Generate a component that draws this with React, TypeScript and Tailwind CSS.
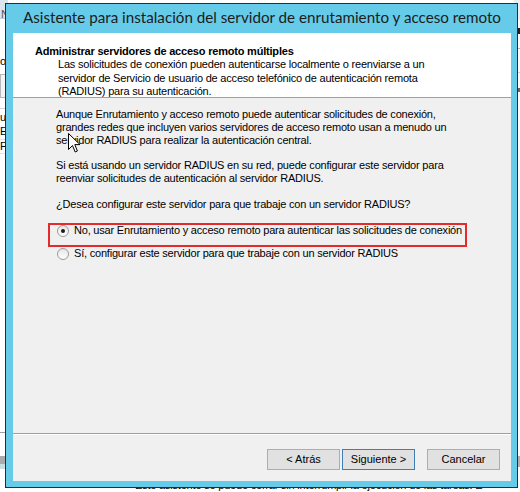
function Radio({ checked, label }: { checked?: boolean; label: string }) {
  return (
    <div className="flex items-start gap-[5px]">
      <span className="mt-[1px] flex h-[12px] w-[12px] items-center justify-center rounded-full border border-[#9a9a9a] bg-gradient-to-b from-[#e6e6e6] to-white">
        {checked && <span className="h-[4px] w-[4px] rounded-full bg-[#1a1a1a]" />}
      </span>
      <span className="whitespace-nowrap leading-[13px]">{label}</span>
    </div>
  )
}

function WizardButton({ label, primary }: { label: string; primary?: boolean }) {
  return (
    <button
      className={
        primary
          ? 'flex h-[21px] w-[73px] items-center justify-center border border-[#3d7fb6] bg-[#e1e1e1] leading-[13px]'
          : 'flex h-[21px] w-[73px] items-center justify-center border border-[#adadad] bg-[#e1e1e1] leading-[13px]'
      }
    >
      {label}
    </button>
  )
}

function Cursor() {
  return (
    <svg className="absolute left-[55px] top-[35px]" width="13" height="21" viewBox="0 0 13 21">
      <path
        d="M0.5 0.5 L0.5 16.5 L4.5 12.5 L7.2 19 L9.4 18 L6.8 11.6 L12 11.6 Z"
        fill="#fff"
        stroke="#000"
        strokeWidth="1"
      />
    </svg>
  )
}

// the window behind the wizard, only its edges show
function BehindWindow() {
  return (
    <div className="flex h-full w-full flex-col">
      <div className="flex h-[486px] justify-between">
        <div className="flex w-[8px] flex-col overflow-hidden">
          <div className="h-[18px] shrink-0 bg-[#dde5ec] pt-[6px] pl-[1px] text-[#555]">N</div>
          <div className="h-px shrink-0 bg-[#c4ccd4]" />
          <div className="h-[36px] shrink-0" />
          <div className="h-[19px] shrink-0 leading-[13px]">o</div>
          <div className="h-[24px] shrink-0 border border-[#b8b8b8] bg-[#f4f4f4]" />
          <div className="h-[10px] shrink-0" />
          <div className="h-px shrink-0 bg-[#d6d6d6]" />
          <div className="h-[16px] shrink-0 pt-[2px] leading-[13px]">u</div>
          <div className="h-[14px] shrink-0 leading-[13px]">E</div>
          <div className="h-px shrink-0 bg-[#e2e2e2]" />
          <div className="h-[13px] shrink-0 leading-[13px]">F</div>
          <div className="h-px shrink-0 bg-[#e2e2e2]" />
          <div className="h-[278px] shrink-0" />
          <div className="h-px shrink-0 bg-[#a0a0a0]" />
          <div className="h-[23px] shrink-0" />
          <div className="h-[8px] shrink-0 bg-[#ababab]" />
          <div className="h-[5px] shrink-0 bg-[#c9dde4]" />
        </div>
        <div className="flex w-[6px] flex-col">
          <div className="h-[20px] shrink-0 bg-[#e9eef3]" />
          <div className="h-[8px] shrink-0" />
          <div className="ml-[3px] h-[6px] shrink-0 bg-[#222]" />
          <div className="h-[14px] shrink-0" />
          <div className="h-px shrink-0 bg-[#b5b5b5]" />
          <div className="h-[23px] shrink-0" />
          <div className="h-px shrink-0 bg-[#cfcfcf]" />
          <div className="h-[15px] shrink-0" />
          <div className="ml-[4px] h-[4px] shrink-0 bg-[#666]" />
          <div className="h-[364px] shrink-0" />
          <div className="h-[11px] shrink-0 bg-[#b0b0b0]" />
        </div>
      </div>
      <div className="flex">
        <div className="ml-[73px] h-[8px] w-px bg-[#c8c8c8]" />
        <div className="ml-[61px] mt-[-1px] whitespace-nowrap leading-[13px]">
          Este asistente se puede cerrar sin interrumpir la ejecución de las tareas. E
        </div>
      </div>
    </div>
  )
}

export default function App() {
  return (
    <div className="relative h-[492px] w-[520px] overflow-hidden bg-white font-['Liberation_Sans',Arial,sans-serif] text-[11px] tracking-[-0.2px] text-black">
      <BehindWindow />

      <div className="absolute left-[5px] top-[3px] flex h-[485px] w-[513px] flex-col border border-[#2b2b2b] bg-[#65cbe9]">
        <div className="h-[29px] shrink-0 whitespace-nowrap pl-[17px] pt-[3px] font-['Lato',sans-serif] text-[15.2px] leading-[20px] tracking-normal text-[#1c1c1c]">
          Asistente para instalación del servidor de enrutamiento y acceso remoto
        </div>

        <div className="mb-[6px] ml-[7px] mr-[6px] flex flex-1 flex-col bg-[#f0f0f0]">
          <header className="h-[64px] shrink-0 bg-white pl-[22px] pt-[12px]">
            <h1 className="font-bold leading-[13px]">Administrar servidores de acceso remoto múltiples</h1>
            <p className="pl-[23px] leading-[13.5px]">
              Las solicitudes de conexión pueden autenticarse localmente o reenviarse a un
              <br />
              servidor de Servicio de usuario de acceso telefónico de autenticación remota
              <br />
              (RADIUS) para su autenticación.
            </p>
          </header>
          <div className="h-px shrink-0 bg-[#a0a0a0]" />

          <section className="relative flex flex-1 flex-col pl-[43px] pt-[10px] leading-[13px]">
            <p>
              Aunque Enrutamiento y acceso remoto puede autenticar solicitudes de conexión,
              <br />
              grandes redes que incluyen varios servidores de acceso remoto usan a menudo un
              <br />
              servidor RADIUS para realizar la autenticación central.
            </p>
            <p className="mt-[12px]">
              Si está usando un servidor RADIUS en su red, puede configurar este servidor para
              <br />
              reenviar solicitudes de autenticación al servidor RADIUS.
            </p>
            <p className="mt-[13px]">¿Desea configurar este servidor para que trabaje con un servidor RADIUS?</p>

            <div className="ml-[1px] mt-[13px] flex flex-col gap-[10px]">
              <div className="relative">
                <div className="absolute left-[-9px] top-[-1px] h-[24px] w-[419px] border-2 border-[#e42b2b]" />
                <Radio checked label="No, usar Enrutamiento y acceso remoto para autenticar las solicitudes de conexión" />
              </div>
              <Radio label="Sí, configurar este servidor para que trabaje con un servidor RADIUS" />
            </div>

            <Cursor />
          </section>

          <div className="h-px shrink-0 bg-[#a0a0a0]" />
          <div className="h-px shrink-0 bg-white" />
          <footer className="flex h-[46px] shrink-0 justify-end pr-[11px] pt-[14px] tracking-normal">
            <div className="flex gap-[2px]">
              <WizardButton label="< Atrás" />
              <WizardButton label="Siguiente >" primary />
            </div>
            <div className="ml-[12px]">
              <WizardButton label="Cancelar" />
            </div>
          </footer>
        </div>
      </div>
    </div>
  )
}
